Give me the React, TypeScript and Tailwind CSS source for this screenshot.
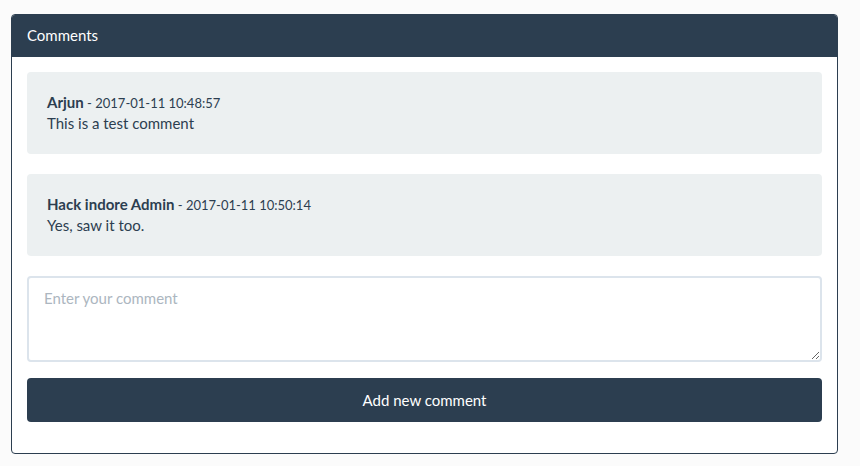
import React from 'react';

const comments = [
  { author: 'Arjun', time: '2017-01-11 10:48:57', text: 'This is a test comment' },
  { author: 'Hack indore Admin', time: '2017-01-11 10:50:14', text: 'Yes, saw it too.' },
];

export default function App() {
  return (
    <div className="min-h-[466px] bg-[#fbfbfb] pt-[14px] pl-[11px] pr-[22px] font-['Lato','Liberation_Sans',sans-serif] text-[15px] leading-[21px] text-[#2c3e50]">
      <div className="w-[827px] rounded-[4px] border border-[#2c3e50] bg-white">
        <div className="h-[42px] rounded-t-[3px] bg-[#2c3e50] px-[15px] pt-[10px] text-white">Comments</div>
        <div className="px-[15px] pt-[15px] pb-[31px]">
          {comments.map((c) => (
            <div key={c.time} className="mb-[20px] rounded-[4px] bg-[#ecf0f1] px-[20px] py-[20px]">
              <div className="h-[21px]">
                <span className="font-bold">{c.author}</span>
                <span className="text-[13px] leading-none"> - {c.time}</span>
              </div>
              <div>{c.text}</div>
            </div>
          ))}
          <textarea
            placeholder="Enter your comment"
            className="block h-[86px] w-full rounded-[4px] border-2 border-[#dce4ec] px-[15px] py-[10px] text-[15px] leading-[21px] outline-none placeholder:text-[#acb6c0]"
          />
          <button className="mt-[16px] block h-[44px] w-full rounded-[4px] bg-[#2c3e50] text-[15px] text-white">
            Add new comment
          </button>
        </div>
      </div>
    </div>
  );
}
